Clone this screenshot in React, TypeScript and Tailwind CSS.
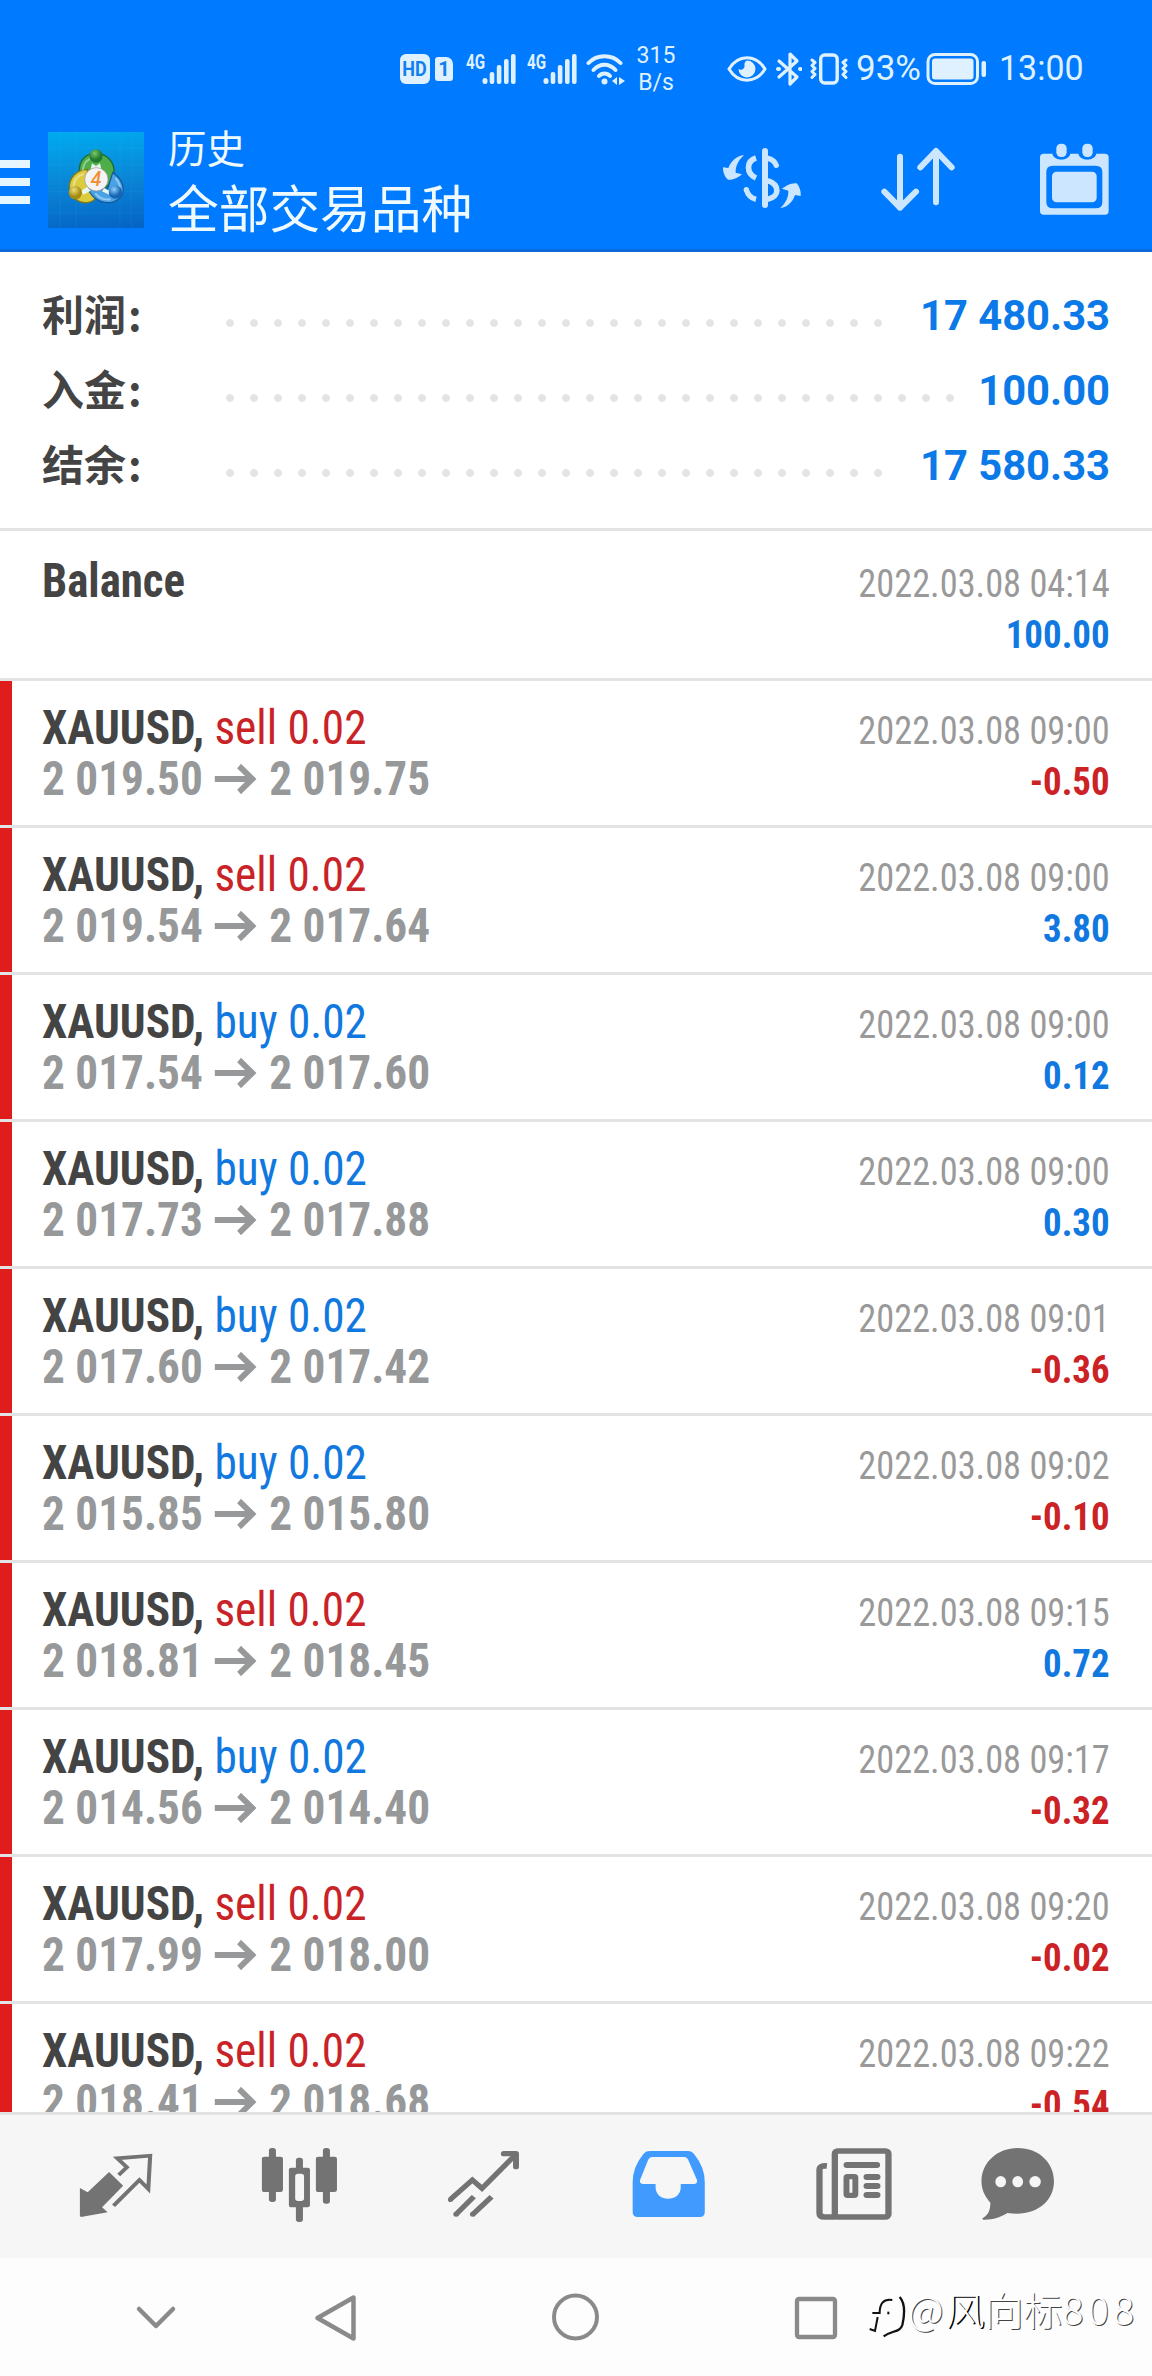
import React from "react";

type Deal = {
  side: "sell" | "buy";
  open: string;
  close: string;
  time: string;
  profit: string;
};

const deals: Deal[] = [
  { side: "sell", open: "2 019.50", close: "2 019.75", time: "2022.03.08 09:00", profit: "-0.50" },
  { side: "sell", open: "2 019.54", close: "2 017.64", time: "2022.03.08 09:00", profit: "3.80" },
  { side: "buy", open: "2 017.54", close: "2 017.60", time: "2022.03.08 09:00", profit: "0.12" },
  { side: "buy", open: "2 017.73", close: "2 017.88", time: "2022.03.08 09:00", profit: "0.30" },
  { side: "buy", open: "2 017.60", close: "2 017.42", time: "2022.03.08 09:01", profit: "-0.36" },
  { side: "buy", open: "2 015.85", close: "2 015.80", time: "2022.03.08 09:02", profit: "-0.10" },
  { side: "sell", open: "2 018.81", close: "2 018.45", time: "2022.03.08 09:15", profit: "0.72" },
  { side: "buy", open: "2 014.56", close: "2 014.40", time: "2022.03.08 09:17", profit: "-0.32" },
  { side: "sell", open: "2 017.99", close: "2 018.00", time: "2022.03.08 09:20", profit: "-0.02" },
  { side: "sell", open: "2 018.41", close: "2 018.68", time: "2022.03.08 09:22", profit: "-0.54" },
];

const summary = [
  { label: "利润", value: "17 480.33", dots: "w-[672px]" },
  { label: "入金", value: "100.00", dots: "w-[744px]" },
  { label: "结余", value: "17 580.33", dots: "w-[672px]" },
];

function Signal() {
  return (
    <div className="flex w-[51px] items-start">
      <span className="w-[16px] origin-left scale-x-[0.76] text-[20px] leading-[20px] font-bold">4G</span>
      <svg className="h-[34px] w-[35px]" viewBox="0 0 35 34" fill="currentColor">
        <rect x="0.5" y="26" width="5" height="6" rx="2.5" />
        <rect x="7.7" y="20" width="4.6" height="12" rx="2" />
        <rect x="14.8" y="13" width="4.6" height="19" rx="2" />
        <rect x="22" y="7" width="4.6" height="25" rx="2" />
        <rect x="29" y="2" width="4.6" height="30" rx="2" />
      </svg>
    </div>
  );
}

function StatusBar() {
  return (
    <div className="flex h-[111px] items-center pt-[26px] pl-[400px] text-[#dff1ff]">
      <div className="flex h-[30px] w-[30px] items-center justify-center rounded-[6px] bg-current">
        <span className="scale-x-[0.9] text-[20px] leading-none font-bold text-[#1180ee]">HD</span>
      </div>
      <div className="ml-[5px] flex h-[24px] w-[18px] items-center justify-center rounded-[3px] rounded-tr-[7px] bg-current">
        <span className="text-[20px] leading-none font-bold text-[#1180ee]">1</span>
      </div>
      <div className="ml-[13px]"><Signal /></div>
      <div className="ml-[10px]"><Signal /></div>
      <svg className="ml-[8px] h-[32px] w-[40px]" viewBox="0 0 40 32" fill="none" stroke="currentColor" strokeWidth="4" strokeLinecap="round">
        <path d="M2.5 10 C11 1 26 1 34.5 10" />
        <path d="M7.5 17 C14 10 23 10 29.5 17" />
        <path d="M13 23 C16 19.5 21 19.5 24 23" />
        <circle cx="18.5" cy="28.5" r="3" fill="currentColor" stroke="none" />
        <path d="M31 24 L26 28 L31 32Z M33 24 L39 28 L33 32Z" fill="currentColor" stroke="none" />
      </svg>
      <div className="ml-[8px] w-[44px] text-center text-[23px] leading-[27px]">
        <div>315</div>
        <div>B/s</div>
      </div>
      <svg className="ml-[49px] h-[30px] w-[40px]" viewBox="0 0 40 30" fill="none" stroke="currentColor" strokeWidth="3">
        <path d="M2 15 C11 0 29 0 38 15 C29 30 11 30 2 15Z" />
        <path d="M20 6.5 A8.5 8.5 0 1 1 11.5 15 C14 17 18 15 17.5 11.500 C17.500 9 17.500 8 20 6.500Z" fill="currentColor" stroke="none" />
      </svg>
      <svg className="ml-[9px] h-[36px] w-[26px]" viewBox="0 0 26 36" fill="none" stroke="currentColor" strokeWidth="3.2" strokeLinejoin="round" strokeLinecap="round">
        <path d="M3 10 L21 26 L14 33 V3 L21 10 L3 26" />
        <path d="M2 18 h1 M24 18 h0.500" strokeWidth="4" />
      </svg>
      <svg className="ml-[8px] h-[34px] w-[38px]" viewBox="0 0 38 34" fill="none" stroke="currentColor" strokeWidth="3.4" strokeLinejoin="round" strokeLinecap="round">
        <rect x="10.700" y="3" width="16.500" height="28" rx="4" />
        <path d="M2 8 L5 10.500 L2 13.500 L5 16.500 L2 19.500 L5 22.500 L2 25.500" strokeWidth="3" />
        <path d="M36 8 L33 10.500 L36 13.500 L33 16.500 L36 19.500 L33 22.500 L36 25.500" strokeWidth="3" />
      </svg>
      <span className="ml-[8px] w-[68px] text-[35px] leading-[40px]">93%</span>
      <svg className="ml-[2px] h-[34px] w-[62px]" viewBox="0 0 62 34">
        <rect x="2" y="2.500" width="49.500" height="29" rx="7" fill="none" stroke="currentColor" strokeWidth="3" />
        <rect x="6" y="6.500" width="41.500" height="21" rx="3" fill="currentColor" />
        <rect x="55.500" y="9" width="4.500" height="16" rx="2" fill="currentColor" />
      </svg>
      <span className="ml-[11px] origin-left scale-x-[0.97] text-[35px] leading-[40px]">13:00</span>
    </div>
  );
}

function AppLogo() {
  return (
    <svg className="ml-[18px] h-[96px] w-[96px]" viewBox="12 12 288 288">
      <defs>
        <linearGradient id="tile" x1="0.500" y1="0" x2="0.600" y2="1">
          <stop offset="0" stopColor="#00a8ee" />
          <stop offset="0.500" stopColor="#0a86d6" />
          <stop offset="1" stopColor="#0565c6" />
        </linearGradient>
        <radialGradient id="green" cx="0.400" cy="0.300"><stop offset="0" stopColor="#7cc46c" /><stop offset="1" stopColor="#1f7a2c" /></radialGradient>
        <radialGradient id="yellow" cx="0.400" cy="0.300"><stop offset="0" stopColor="#ece07a" /><stop offset="1" stopColor="#a48a12" /></radialGradient>
        <radialGradient id="azure" cx="0.400" cy="0.300"><stop offset="0" stopColor="#8fd0ff" /><stop offset="1" stopColor="#1566b4" /></radialGradient>
      </defs>
      <rect x="12" y="12" width="288" height="288" fill="url(#tile)" />
      <path d="M48 12V300 M96 12V300 M228 12V300 M262 12V300 M12 60H300 M12 110H300 M12 190H300 M12 255H300" stroke="#4fc0f5" strokeOpacity="0.160" strokeWidth="2" />
      <g strokeWidth="4">
        <path d="M106 132 C104 92 130 76 156 76 C190 76 212 104 210 134 C208 160 196 172 184 178 L130 140Z" fill="#4fae4a" stroke="#1d6b33" />
        <path d="M130 124 C96 126 76 150 76 178 C78 208 104 226 130 224 C146 222 156 212 160 202 L132 176Z" fill="#dccb3c" stroke="#7c7a1c" />
        <path d="M206 134 C232 150 242 176 236 196 C226 222 196 230 170 220 C150 212 138 196 132 182 L190 186Z" fill="#4aa2e6" stroke="#165a9e" />
      </g>
      <path d="M116 128 C118 100 134 92 150 88 M88 176 C90 154 104 142 120 138 M214 150 C226 162 230 178 228 186 M154 196 C166 212 184 216 200 214" fill="none" stroke="#ffffff" strokeOpacity="0.400" strokeWidth="6" />
      <path d="M144 106 L156 114 L168 106 L172 124 H140Z M112 188 L130 176 L140 188 L118 200Z M196 188 L180 180 L174 190 L196 200Z" fill="#e8f5f0" />
      <circle cx="156" cy="84" r="20" fill="url(#green)" />
      <circle cx="94" cy="194" r="20" fill="url(#yellow)" />
      <circle cx="214" cy="192" r="20" fill="url(#azure)" />
      <circle cx="157" cy="154" r="35" fill="#f4f4f6" stroke="#9a8f80" strokeWidth="2" />
      <text x="156" y="174" textAnchor="middle" fontFamily="Roboto, sans-serif" fontStyle="italic" fontWeight="500" fontSize="58" fill="#f09038">4</text>
    </svg>
  );
}

function Header() {
  return (
    <header className="h-[252px] border-b-[3px] border-[#0a6adb] bg-[#007aff]">
      <StatusBar />
      <div className="flex h-[138px] items-center">
        <div className="mt-[4px] flex w-[30px] flex-col gap-[10px]">
          <div className="h-[8px] bg-[#e6f6ff]" />
          <div className="h-[8px] bg-[#e6f6ff]" />
          <div className="h-[8px] bg-[#e6f6ff]" />
        </div>
        <AppLogo />
        <div className="mt-[3px] ml-[24px] w-[532px] font-['Noto_Sans_CJK_SC','Roboto',sans-serif] text-[#effaff]">
          <div className="text-[38.5px] leading-[48px]">历史</div>
          <div className="text-[50.7px] leading-[72px]">全部交易品种</div>
        </div>
        <svg className="h-[80px] w-[120px]" viewBox="0 0 360 240" fill="none" stroke="#cce6ff" strokeLinecap="round">
          <path d="M195 33 V195" strokeWidth="18" />
          <path d="M204 55 C216 58 225 64 229 76" strokeWidth="16" />
          <path d="M168 54 C138 64 138 100 168 114" strokeWidth="17" strokeLinecap="butt" />
          <path d="M203 122 C240 134 240 170 203 178" strokeWidth="17" strokeLinecap="butt" />
          <path d="M139 149 C144 166 152 174 168 178" strokeWidth="16" strokeLinecap="butt" />
          <circle cx="139" cy="149" r="8" fill="#cce6ff" stroke="none" />
          <path d="M132 45 C110 48 92 64 85 84 L69 82 C68 94 74 112 84 119 C96 122 116 112 126 103 L107 98 C106 80 114 62 132 45Z" fill="#cce6ff" stroke="none" />
          <path d="M241 204 C262 202 278 186 285 165 L302 168 C304 156 298 138 290 130 C276 127 256 138 246 146 L265 152 C266 170 258 188 241 204Z" fill="#cce6ff" stroke="none" />
        </svg>
        <svg className="ml-[60px] h-[80px] w-[80px]" viewBox="540 60 240 240" fill="none" stroke="#cce6ff" strokeWidth="18" strokeLinecap="round" strokeLinejoin="round">
          <path d="M600 110 V263 M553 215 L600 263 L648 215" />
          <path d="M708 247 V93 M661 142 L708 93 L755 142" />
        </svg>
        <svg className="ml-[77px] h-[80px] w-[75px]" viewBox="1010 60 225 240">
          <path fillRule="evenodd" d="M1030 101 H1056 C1060 124 1106 124 1110 101 H1134 C1138 124 1184 124 1188 101 H1214 Q1225 101 1225 112 V273 Q1225 284 1214 284 H1030 Q1019 284 1019 273 V112 Q1019 101 1030 101Z M1058 137 Q1038 137 1038 155 V247 Q1038 265 1058 265 H1186 Q1206 265 1206 247 V155 Q1206 137 1186 137Z" fill="#cce6ff" />
          <rect x="1055" y="155" width="134" height="92" rx="14" fill="#cce6ff" />
          <rect x="1061" y="64" width="45" height="54" rx="22" fill="#007aff" />
          <rect x="1139" y="64" width="45" height="54" rx="22" fill="#007aff" />
          <rect x="1068" y="71" width="31" height="40" rx="14" fill="#cce6ff" />
          <rect x="1146" y="71" width="31" height="40" rx="14" fill="#cce6ff" />
        </svg>
      </div>
    </header>
  );
}

function Amount({ value }: { value: string }) {
  const tone = value.startsWith("-") ? "text-[#cc2225]" : "text-[#1078df]";
  return <div className={`origin-right scale-x-[1.015] font-bold ${tone}`}>{value}</div>;
}

function DealRow({ deal }: { deal: Deal }) {
  return (
    <div className="flex h-[147px] shrink-0 border-b-[3px] border-[#e3e3e3]">
      <div className="w-[12px] bg-[#e01d1d]" />
      <div className="flex flex-1 justify-between pr-[42px] pl-[30px] font-['Roboto_Condensed','Roboto',sans-serif]">
        <div className="origin-left scale-x-[0.943] pt-[21px] text-[48px] leading-[51px] whitespace-nowrap">
          <div>
            <span className="font-bold text-[#444444]">XAUUSD, </span>
            <span className={deal.side === "sell" ? "text-[#ca2327]" : "text-[#1078df]"}>{deal.side} 0.02</span>
          </div>
          <div className="flex items-center font-bold text-[#969899]">
            <span className="w-[170px]">{deal.open}</span>
            <svg className="mr-[13px] ml-[13px] h-[30px] w-[45px]" viewBox="0 0 45 30" fill="none" stroke="currentColor" strokeWidth="6">
              <path d="M0 15 H40 M26 2 L40 15 L26 28" />
            </svg>
            <span>{deal.close}</span>
          </div>
        </div>
        <div className="origin-right scale-x-[0.932] pt-[25px] text-right text-[39px] leading-[51px] whitespace-nowrap">
          <div className="text-[#999999]">{deal.time}</div>
          <Amount value={deal.profit} />
        </div>
      </div>
    </div>
  );
}

function TabBar() {
  return (
    <nav className="flex h-[146px] shrink-0 items-center border-t-[3px] border-[#e3e3e3] bg-[#f6f6f6] pb-[2px] text-[#737373]">
      <svg className="ml-[76px] h-[80px] w-[80px]" viewBox="205.5 498 216.3 240" preserveAspectRatio="none">
        <path d="M216 624 L237 637 L295 576 L333 617 L276 682 L291 697 L219 711 L216 708Z" fill="currentColor" />
        <path d="M321 585 L343 562 L317 535 L406 527 L401 627 L377 600 L307 677" fill="none" stroke="currentColor" strokeWidth="11" />
      </svg>
      <svg className="ml-[103px] h-[80px] w-[80px]" viewBox="700.2 498 216.3 240" preserveAspectRatio="none" fill="currentColor">
        <rect x="708" y="530" width="57" height="106" rx="7" />
        <rect x="727" y="504" width="19" height="162" rx="8" />
        <rect x="854" y="530" width="57" height="106" rx="7" />
        <rect x="873" y="504" width="19" height="167" rx="8" />
        <rect x="800" y="533" width="19" height="45" rx="8" />
        <rect x="800" y="670" width="19" height="56" rx="8" />
        <path fillRule="evenodd" d="M788 563 H831 Q838 563 838 570 V675 Q838 682 831 682 H788 Q781 682 781 675 V570 Q781 563 788 563Z M806 581 Q798 581 798 589 V655 Q798 663 806 663 H814 Q822 663 822 655 V589 Q822 581 814 581Z" />
      </svg>
      <svg className="ml-[104px] h-[80px] w-[80px]" viewBox="1197.6 498 216.3 240" preserveAspectRatio="none" fill="none" stroke="currentColor" strokeWidth="15">
        <path d="M1218 658 L1277 600 L1303 625 L1394 524" />
        <path d="M1362 521 H1395 V560" strokeWidth="16" strokeLinecap="round" strokeLinejoin="round" />
        <path d="M1232 704 L1281 650 M1277 704 L1329 650" />
        <g fill="currentColor" stroke="none"><circle cx="1218" cy="659" r="7" /><circle cx="1233" cy="703" r="7.500" /><circle cx="1278" cy="703" r="7.500" /></g>
      </svg>
      <svg className="ml-[106px] h-[80px] w-[80px]" viewBox="154.1 198 216.3 240" preserveAspectRatio="none">
        <path d="M209 213 H315 Q324 213 330 222 Q359 262 359 306 V396 Q359 411 345 411 H178 Q164 411 164 396 V306 Q164 262 193 222 Q199 213 209 213Z" fill="#419bff" />
        <path d="M216 231 H304 Q311 231 314 239 L338 300 Q340 312 329 312 H294 V322 C294 368 226 368 226 322 V312 H193 Q182 312 184 300 L206 239 Q209 231 216 231Z" fill="#f6f6f6" />
      </svg>
      <svg className="ml-[105px] h-[80px] w-[80px]" viewBox="654.2 198 216.3 240" preserveAspectRatio="none" fill="none" stroke="currentColor">
        <rect x="710.500" y="213" width="145" height="198" rx="8" strokeWidth="17" />
        <path d="M689 258 Q669 256 669 270 V399 Q669 411 682 411 H712" strokeWidth="17" />
        <path d="M743 255 H824 M797 291 H825 M797 318 H825 M797 345 H825" strokeWidth="18" strokeLinecap="round" />
        <rect x="742" y="290" width="24" height="56" rx="3" strokeWidth="16" />
      </svg>
      <svg className="ml-[84px] h-[80px] w-[80px]" viewBox="1097.6 198 216.3 240" preserveAspectRatio="none">
        <path d="M1205 204 C1262 204 1303 248 1303 304 C1303 368 1250 412 1177 399 C1158 412 1136 420 1112 419 Q1107 416 1112 413 C1126 404 1131 388 1131 368 C1116 350 1107 328 1107 304 C1107 248 1150 204 1205 204Z" fill="currentColor" />
        <g fill="#f6f6f6"><ellipse cx="1159" cy="305" rx="14.500" ry="17" /><ellipse cx="1205" cy="305" rx="14.500" ry="17" /><ellipse cx="1252" cy="305" rx="15.500" ry="17" /></g>
      </svg>
    </nav>
  );
}

function SystemBar() {
  return (
    <div className="flex h-[118px] shrink-0 items-center bg-[#fdfdfd] text-[#8a8a8a]">
      <svg className="ml-[130px] h-[60px] w-[50px]" viewBox="130 2287 50 60" fill="none" stroke="currentColor" strokeWidth="4.500" strokeLinecap="round" strokeLinejoin="round">
        <path d="M139 2309 L156 2326 L173 2309" />
      </svg>
      <svg className="ml-[130px] h-[60px] w-[50px]" viewBox="310 2287 50 60" fill="none" stroke="currentColor" strokeWidth="4.500" strokeLinejoin="round">
        <path d="M353.500 2297.500 V2338.500 L317.500 2318Z" />
      </svg>
      <svg className="ml-[191px] h-[60px] w-[50px]" viewBox="551 2287 50 60" fill="none" stroke="currentColor" strokeWidth="4">
        <circle cx="575.500" cy="2317" r="21.500" />
      </svg>
      <svg className="ml-[189px] h-[60px] w-[50px]" viewBox="790 2287 50 60" fill="none" stroke="currentColor" strokeWidth="4.300">
        <rect x="797" y="2299" width="38" height="38" rx="2" />
      </svg>
      <div className="ml-[26px] flex items-center">
        <svg className="h-[50px] w-[40px]" viewBox="17 35 120 150" fill="none" stroke="#111111" strokeWidth="6">
          <path d="M96 59 C68 54 58 72 58 98 H36 M52 110 L44 152 L28 146" />
          <path d="M118 50 C136 70 132 108 126 134 C120 156 94 150 70 168" strokeWidth="7" />
          <path d="M84 94 V102" />
        </svg>
        <span className="mb-[18px] ml-[2px] font-['Noto_Sans_CJK_SC',sans-serif] text-[39px] leading-[50px] font-light whitespace-nowrap text-white [text-shadow:1px_1px_0_#444444]">
          @<span className="ml-[2px] [text-shadow:1.5px_1px_0_#000000]">风</span>向标<span className="tracking-[4.5px]">808</span>
        </span>
      </div>
    </div>
  );
}

export default function App() {
  return (
    <div className="flex h-[2376px] w-[1152px] flex-col overflow-hidden bg-white font-['Roboto',sans-serif]">
      <Header />
      <main className="flex h-[1860px] flex-col overflow-hidden">
        <section className="h-[279px] shrink-0 border-b-[3px] border-[#e3e3e3] pt-[27px]">
          {summary.map((row) => (
            <div key={row.label} className="flex h-[75px] items-center pr-[42px] pl-[42px]">
              <span className="mb-[7px] w-[176px] font-['Noto_Sans_CJK_SC',sans-serif] text-[42px] leading-[60px] font-bold text-[#444444]">
                {row.label}
                <span className="ml-[2px]">:</span>
              </span>
              <div className={`mt-[13px] h-[24px] bg-[radial-gradient(circle,#e4e4e4_3.5px,transparent_4.3px)] bg-[length:24px_24px] ${row.dots}`} />
              <span className="mb-[2px] flex-1 origin-right scale-x-[0.993] text-right text-[42px] leading-[50px] font-bold whitespace-nowrap text-[#0b79e8]">{row.value}</span>
            </div>
          ))}
        </section>
        <div className="flex h-[150px] shrink-0 justify-between border-b-[3px] border-[#e3e3e3] pt-[3px] pr-[42px] pl-[42px] font-['Roboto_Condensed','Roboto',sans-serif]">
          <div className="origin-left scale-x-[0.935] pt-[21px] text-[48px] leading-[51px] font-bold text-[#444444]">Balance</div>
          <div className="origin-right scale-x-[0.932] pt-[25px] text-right text-[39px] leading-[51px] whitespace-nowrap">
            <div className="text-[#999999]">2022.03.08 04:14</div>
            <Amount value="100.00" />
          </div>
        </div>
        {deals.map((deal, i) => (
          <DealRow key={i} deal={deal} />
        ))}
      </main>
      <TabBar />
      <SystemBar />
    </div>
  );
}
